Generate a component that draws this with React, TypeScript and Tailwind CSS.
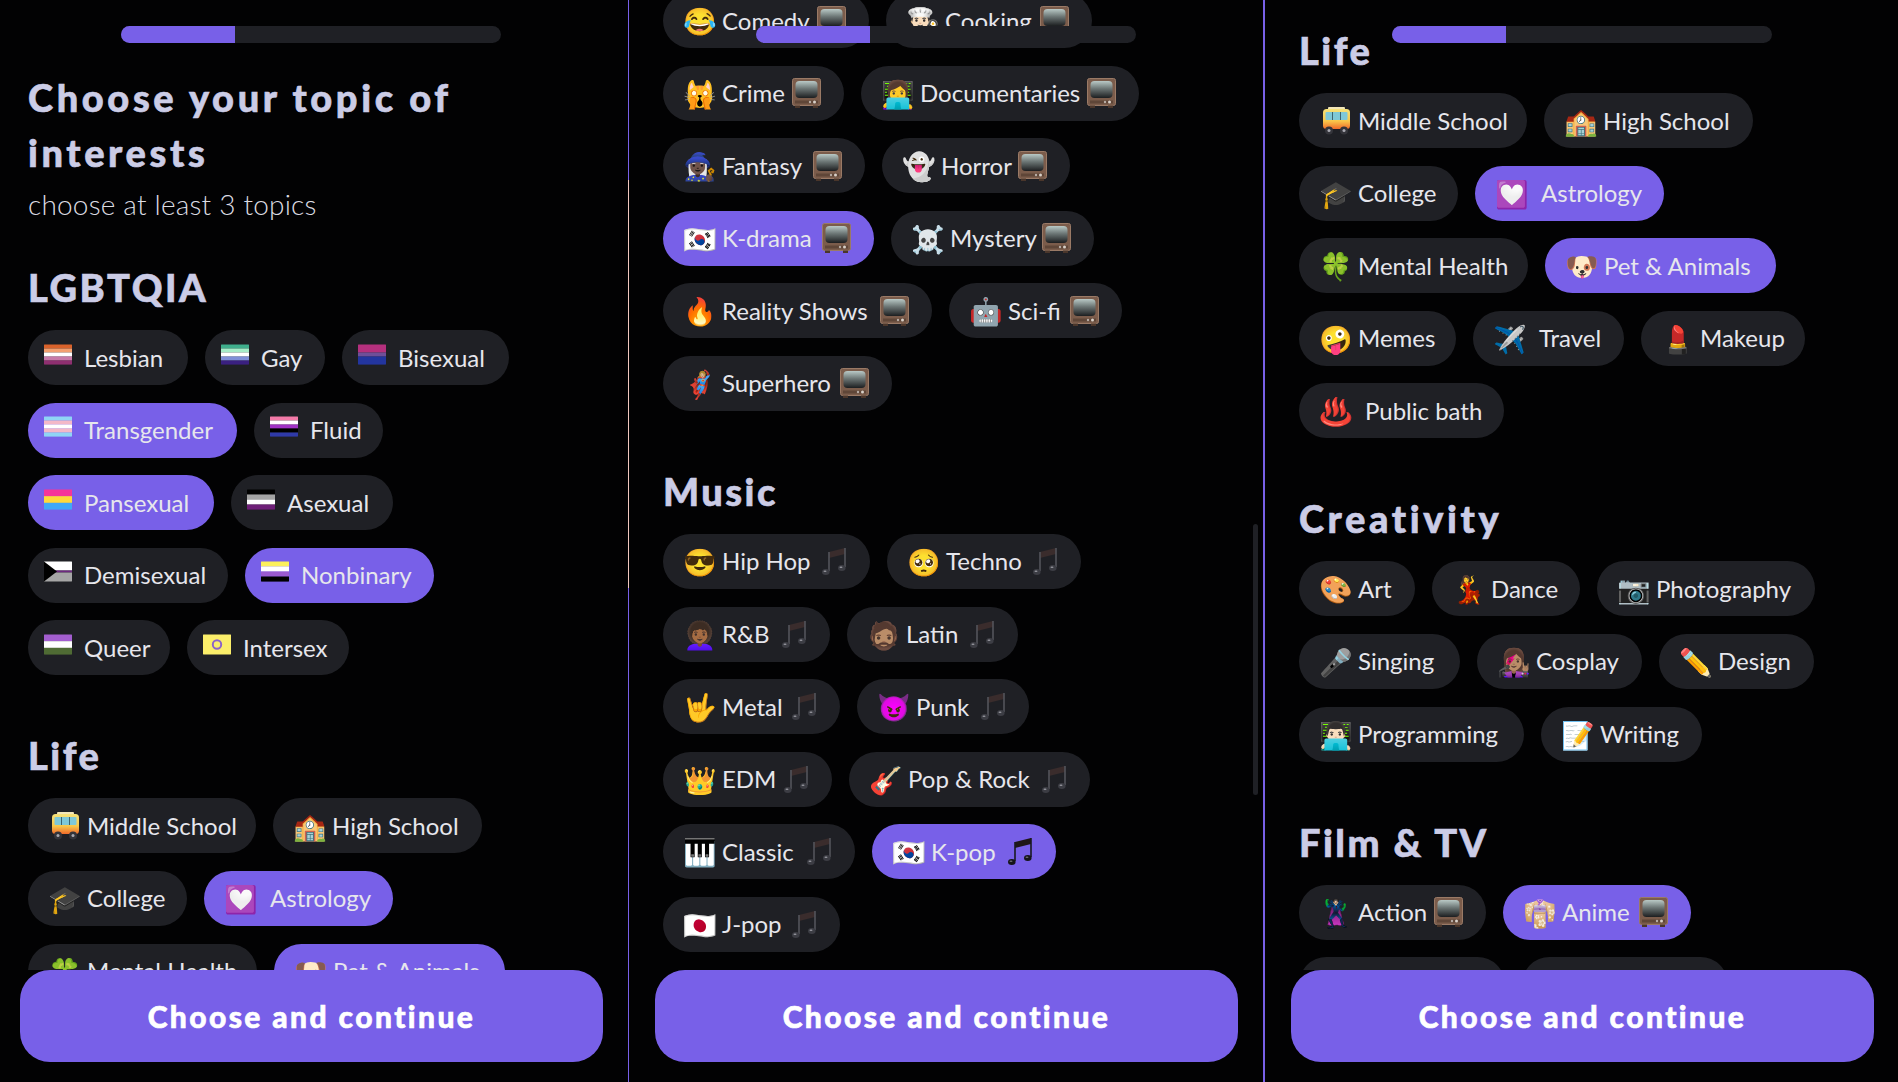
import React from "react";

type Topic = {
  label: string;
  icon?: React.ReactNode;
  iconCls?: string;
  flag?: string;
  tail?: "tv" | "note";
  w: string;
  on?: boolean;
  wide?: boolean;
};

type Section = { title?: string; titleCls?: string; rows: Topic[][] };

const TV = "tv" as const;
const NOTE = "note" as const;

// stripes top to bottom, [colour, weight]
const flags: Record<string, [string, number][]> = {
  lesbian: [["#d9622b", 1], ["#f2a070", 1], ["#ffffff", 1], ["#c77aa8", 1], ["#8e2f70", 1]],
  gay: [["#3fae8c", 1], ["#a6ecc8", 1], ["#ffffff", 1], ["#7f8fd8", 1], ["#3a2080", 1]],
  bi: [["#b5307e", 2], ["#6f4f98", 1], ["#23359f", 2]],
  trans: [["#8fd4f5", 1], ["#f3b8c8", 1], ["#ffffff", 1], ["#f3b8c8", 1], ["#8fd4f5", 1]],
  fluid: [["#f37aa8", 1], ["#ffffff", 1], ["#a033c4", 1], ["#000000", 1], ["#2f3aa8", 1]],
  pan: [["#f5359a", 1], ["#ffd93a", 1], ["#3fa8f8", 1]],
  ace: [["#000000", 1], ["#a3a3a3", 1], ["#ffffff", 1], ["#6e1f78", 1]],
  nonbinary: [["#fcf05a", 1], ["#ffffff", 1], ["#9a5ad0", 1], ["#000000", 1]],
  queer: [["#a35ecf", 1], ["#ffffff", 1], ["#4f6b34", 1]],
};

const Flag: React.FC<{ name: string }> = ({ name }) => {
  const cls = "w-[28px] h-[23px] rounded-[2px] -mt-[7px] shrink-0";
  if (name === "demi") {
    return (
      <svg viewBox="0 0 28 20" className={cls}>
        <rect width="28" height="9" fill="#ffffff" />
        <rect y="9" width="28" height="2" fill="#6e2a80" />
        <rect y="11" width="28" height="9" fill="#a6a6a6" />
        <path d="M0 0 L13 10 L0 20 Z" fill="#000000" />
      </svg>
    );
  }
  if (name === "intersex") {
    return (
      <svg viewBox="0 0 28 20" className={cls}>
        <rect width="28" height="20" fill="#fbee6a" />
        <circle cx="14" cy="10" r="4.2" fill="none" stroke="#8d63c8" strokeWidth="2" />
      </svg>
    );
  }
  const stripes = flags[name];
  const total = stripes.reduce((s, x) => s + x[1], 0);
  let y = 0;
  return (
    <svg viewBox="0 0 28 20" className={cls}>
      {stripes.map(([c, n], i) => {
        const h = (n / total) * 20;
        const r = <rect key={i} y={y} width="28" height={h + 0.1} fill={c} />;
        y += h;
        return r;
      })}
    </svg>
  );
};

const TvIcon: React.FC = () => (
  <svg viewBox="0 0 29 30" className="w-[29px] h-[30px] shrink-0">
    <defs>
      <linearGradient id="tvScreen" x1="0" y1="0" x2="0" y2="1">
        <stop offset="0" stopColor="#b9c9c6" />
        <stop offset="0.45" stopColor="#6c7675" />
        <stop offset="1" stopColor="#1c1e20" />
      </linearGradient>
    </defs>
    <rect x="0.5" y="0.5" width="28" height="27" rx="2" fill="#7b5c4b" stroke="#9a7a66" strokeWidth="1" />
    <rect x="3.5" y="3" width="22" height="17" rx="4" fill="url(#tvScreen)" />
    <rect x="3" y="22.5" width="23" height="3" fill="#5f4638" />
    <circle cx="22.5" cy="24" r="1.5" fill="#d8d0c8" />
    <circle cx="18" cy="24" r="1.2" fill="#b8aea6" />
    <rect x="3" y="27.5" width="5" height="2.5" fill="#4a362b" />
    <rect x="21" y="27.5" width="5" height="2.5" fill="#4a362b" />
  </svg>
);

const NoteIcon: React.FC<{ on?: boolean }> = ({ on }) => {
  const stem = on ? "#1a1a20" : "#53545b";
  const head = on ? "#15151a" : "#3c3d44";
  const beam = on ? "#1f1618" : "#3a2c2c";
  const shine = on ? "#6d6d78" : "#9a9aa2";
  return (
    <svg viewBox="0 0 24 29" className="w-[24px] h-[29px] shrink-0">
      <path d="M7 5 L23 1 L23 7 L7 11 Z" fill={beam} />
      <path d="M7 5 V24 M23 1 V20" stroke={stem} strokeWidth="1.6" fill="none" />
      <ellipse cx="3.8" cy="25" rx="3.8" ry="3" fill={head} />
      <ellipse cx="19.8" cy="21" rx="3.8" ry="3" fill={head} />
      <ellipse cx="3" cy="24.3" rx="1.5" ry="0.8" fill={shine} />
      <ellipse cx="19" cy="20.3" rx="1.5" ry="0.8" fill={shine} />
    </svg>
  );
};

const BusIcon: React.FC = () => (
  <svg viewBox="0 0 29 28" className="w-[29px] h-[28px]">
    <defs>
      <linearGradient id="busBody" x1="0" y1="0" x2="0" y2="1">
        <stop offset="0" stopColor="#f6e27a" />
        <stop offset="0.6" stopColor="#f9c74a" />
        <stop offset="1" stopColor="#ef6a2a" />
      </linearGradient>
    </defs>
    <rect x="6" y="0" width="17" height="2.5" rx="1" fill="#f2e6b8" />
    <rect x="1" y="2" width="27" height="20" rx="3.5" fill="url(#busBody)" />
    <rect x="3.5" y="5" width="22" height="8" rx="1" fill="#7fc8d8" />
    <path d="M10.5 5 V13 M18.5 5 V13" stroke="#3c6470" strokeWidth="1" />
    <circle cx="7" cy="23.5" r="4" fill="#34343a" />
    <circle cx="22" cy="23.5" r="4" fill="#34343a" />
    <circle cx="7" cy="23.5" r="1.5" fill="#a8a8b0" />
    <circle cx="22" cy="23.5" r="1.5" fill="#a8a8b0" />
  </svg>
);

const lgbtqia: Topic[][] = [
  [
    { label: "Lesbian", flag: "lesbian", w: "w-[160px]" },
    { label: "Gay", flag: "gay", w: "w-[120px]" },
    { label: "Bisexual", flag: "bi", w: "w-[167px]" },
  ],
  [
    { label: "Transgender", flag: "trans", w: "w-[209px]", on: true },
    { label: "Fluid", flag: "fluid", w: "w-[129px]" },
  ],
  [
    { label: "Pansexual", flag: "pan", w: "w-[186px]", on: true },
    { label: "Asexual", flag: "ace", w: "w-[162px]" },
  ],
  [
    { label: "Demisexual", flag: "demi", w: "w-[200px]" },
    { label: "Nonbinary", flag: "nonbinary", w: "w-[189px]", on: true },
  ],
  [
    { label: "Queer", flag: "queer", w: "w-[142px]" },
    { label: "Intersex", flag: "intersex", w: "w-[162px]" },
  ],
];

const life: Topic[][] = [
  [
    { label: "Middle School", icon: <BusIcon />, w: "w-[228px]" },
    { label: "High School", icon: "🏫", w: "w-[209px]" },
  ],
  [
    { label: "College", icon: "🎓", w: "w-[159px]" },
    { label: "Astrology", icon: "💟", w: "w-[189px]", on: true, wide: true },
  ],
  [
    { label: "Mental Health", icon: "🍀", w: "w-[229px]" },
    { label: "Pet & Animals", icon: "🐶", w: "w-[231px]", on: true },
  ],
  [
    { label: "Memes", icon: "🤪", w: "w-[157px]" },
    { label: "Travel", icon: "✈️", w: "w-[151px]", wide: true },
    { label: "Makeup", icon: "💄", w: "w-[164px]" },
  ],
  [{ label: "Public bath", icon: "♨️", w: "w-[205px]", wide: true }],
];

const creativity: Topic[][] = [
  [
    { label: "Art", icon: "🎨", w: "w-[116px]" },
    { label: "Dance", icon: "💃", w: "w-[148px]" },
    { label: "Photography", icon: "📷", w: "w-[218px]" },
  ],
  [
    { label: "Singing", icon: "🎤", w: "w-[161px]" },
    { label: "Cosplay", icon: "👩🏽‍🎤", w: "w-[165px]" },
    { label: "Design", icon: "✏️", w: "w-[155px]" },
  ],
  [
    { label: "Programming", icon: "👨🏻‍💻", w: "w-[225px]" },
    { label: "Writing", icon: "📝", w: "w-[161px]" },
  ],
];

const film: Topic[][] = [
  [
    { label: "Action", icon: "🦹🏻‍♂️", tail: TV, w: "w-[187px]" },
    { label: "Anime", icon: "👘", iconCls: "hue-rotate-[70deg]", tail: TV, w: "w-[188px]", on: true },
  ],
  [
    { label: "Comedy", icon: "😂", tail: TV, w: "w-[206px]" },
    { label: "Cooking", icon: "👨🏻‍🍳", tail: TV, w: "w-[206px]" },
  ],
  [
    { label: "Crime", icon: "🙀", tail: TV, w: "w-[181px]" },
    { label: "Documentaries", icon: "👩‍💻", tail: TV, w: "w-[278px]" },
  ],
  [
    { label: "Fantasy", icon: "🧙🏿‍♀️", tail: TV, w: "w-[202px]" },
    { label: "Horror", icon: "👻", tail: TV, w: "w-[188px]" },
  ],
  [
    { label: "K-drama", icon: "🇰🇷", tail: TV, w: "w-[211px]", on: true },
    { label: "Mystery", icon: "☠️", tail: TV, w: "w-[203px]" },
  ],
  [
    { label: "Reality Shows", icon: "🔥", tail: TV, w: "w-[269px]" },
    { label: "Sci-fi", icon: "🤖", tail: TV, w: "w-[173px]" },
  ],
  [{ label: "Superhero", icon: "🦸🏼‍♀️", tail: TV, w: "w-[229px]" }],
];

const music: Topic[][] = [
  [
    { label: "Hip Hop", icon: "😎", tail: NOTE, w: "w-[207px]" },
    { label: "Techno", icon: "🥺", tail: NOTE, w: "w-[194px]" },
  ],
  [
    { label: "R&B", icon: "👩🏾‍🦱", tail: NOTE, w: "w-[167px]" },
    { label: "Latin", icon: "🧔🏽", tail: NOTE, w: "w-[171px]" },
  ],
  [
    { label: "Metal", icon: "🤟", tail: NOTE, w: "w-[177px]" },
    { label: "Punk", icon: "😈", tail: NOTE, w: "w-[172px]" },
  ],
  [
    { label: "EDM", icon: "👑", tail: NOTE, w: "w-[169px]" },
    { label: "Pop & Rock", icon: "🎸", tail: NOTE, w: "w-[241px]" },
  ],
  [
    { label: "Classic", icon: "🎹", tail: NOTE, w: "w-[192px]" },
    { label: "K-pop", icon: "🇰🇷", tail: NOTE, w: "w-[184px]", on: true },
  ],
  [{ label: "J-pop", icon: "🇯🇵", tail: NOTE, w: "w-[177px]" }],
];

const Pill: React.FC<{ topic: Topic }> = ({ topic }) => {
  const { label, icon, iconCls, flag, tail, w, on, wide } = topic;
  return (
    <div
      className={`${w} h-[55px] rounded-full shrink-0 flex items-center whitespace-nowrap ${
        on ? "bg-[#7860e8]" : "bg-[#1f2025]"
      } ${flag ? "pl-[16px]" : "pl-[22px]"} ${tail === TV ? "pr-[23px]" : "pr-[24px]"}`}
    >
      {flag ? (
        <Flag name={flag} />
      ) : (
        <span className={`w-[30px] shrink-0 flex justify-center text-[27px] leading-none ${iconCls ?? ""}`}>
          {icon}
        </span>
      )}
      <span className={flag ? "ml-[12px]" : wide ? "ml-[14px]" : "ml-[7px]"}>{label}</span>
      {tail && <span className="ml-auto">{tail === TV ? <TvIcon /> : <NoteIcon on={on} />}</span>}
    </div>
  );
};

const TopicSection: React.FC<{ section: Section; first?: boolean }> = ({ section, first }) => {
  return (
    <section className={first ? "" : "mt-[58px]"}>
      {section.title && (
        <h2
          className={`mb-[21px] text-[38px] leading-[44px] font-black [-webkit-text-stroke:0.6px_#cbcce6] text-[#cbcce6] ${
            section.titleCls ?? "tracking-[2.5px]"
          }`}
        >
          {section.title}
        </h2>
      )}
      <div className="flex flex-col gap-y-[17.6px]">
        {section.rows.map((row, j) => (
          <div key={j} className="flex gap-x-[17px]">
            {row.map((t) => (
              <Pill key={t.label} topic={t} />
            ))}
          </div>
        ))}
      </div>
    </section>
  );
};

const Phone: React.FC<{ top: string; children: React.ReactNode; extra?: React.ReactNode }> = ({
  top,
  children,
  extra,
}) => {
  return (
    <div className="relative w-[623px] h-full shrink-0">
      <div className="h-[970px] overflow-hidden">
        <div className={`px-[28px] ${top}`}>{children}</div>
      </div>
      <div className="absolute top-[26px] left-[121px] w-[380px] h-[17px] rounded-full bg-[#1f2025] overflow-hidden">
        <div className="w-[114px] h-full bg-[#7860e8]" />
      </div>
      {extra}
      <div className="absolute left-[20px] top-[970px] w-[583px] h-[92px] rounded-[30px] bg-[#7860e8] flex items-center justify-center text-[30px] font-black tracking-[2.4px] [-webkit-text-stroke:0.6px_#ffffff] text-white">
        Choose and continue
      </div>
    </div>
  );
};

const App: React.FC = () => {
  return (
    <div className="w-[1898px] h-[1082px] bg-[#020203] overflow-hidden flex font-['Lato',sans-serif] text-[24px] text-[#e6e6ec]">
      <div className="relative w-[629px] h-full shrink-0">
        <Phone top="pt-[70px]">
          <h1 className="text-[38px] leading-[55px] font-black tracking-[3.6px] [-webkit-text-stroke:0.6px_#cbcce6] text-[#cbcce6]">
            Choose your topic of
            <br />
            interests
          </h1>
          <p className="mt-[6px] mb-[43px] text-[28px] leading-[36px] font-light tracking-[0.2px] text-[#dcdce2]">
            choose at least 3 topics
          </p>
          <TopicSection first section={{ title: "LGBTQIA", rows: lgbtqia }} />
          <TopicSection section={{ title: "Life", rows: life.slice(0, 3) }} />
        </Phone>
        <div className="absolute right-0 top-0 w-[1px] h-full bg-[linear-gradient(#7860e8_180px,#f0c8c0_180px,#f0c8c0_588px,#7860e8_588px)]" />
      </div>
      <div className="relative w-[636px] h-full shrink-0 pl-[6px]">
        <Phone
          top="-mt-[7px]"
          extra={<div className="absolute left-[618px] top-[524px] w-[5px] h-[271px] rounded-full bg-[#1f2025]" />}
        >
          <TopicSection first section={{ rows: film.slice(1) }} />
          <TopicSection section={{ title: "Music", rows: music }} />
        </Phone>
        <div className="absolute right-0 top-0 w-[2px] h-full bg-[#7860e8]" />
      </div>
      <div className="w-[633px] h-full shrink-0 pl-[6px]">
        <Phone top="pt-[28px]">
          <TopicSection first section={{ title: "Life", rows: life }} />
          <TopicSection section={{ title: "Creativity", titleCls: "tracking-[3.6px]", rows: creativity }} />
          <TopicSection section={{ title: "Film & TV", rows: film.slice(0, 2) }} />
        </Phone>
      </div>
    </div>
  );
};

export default App;
